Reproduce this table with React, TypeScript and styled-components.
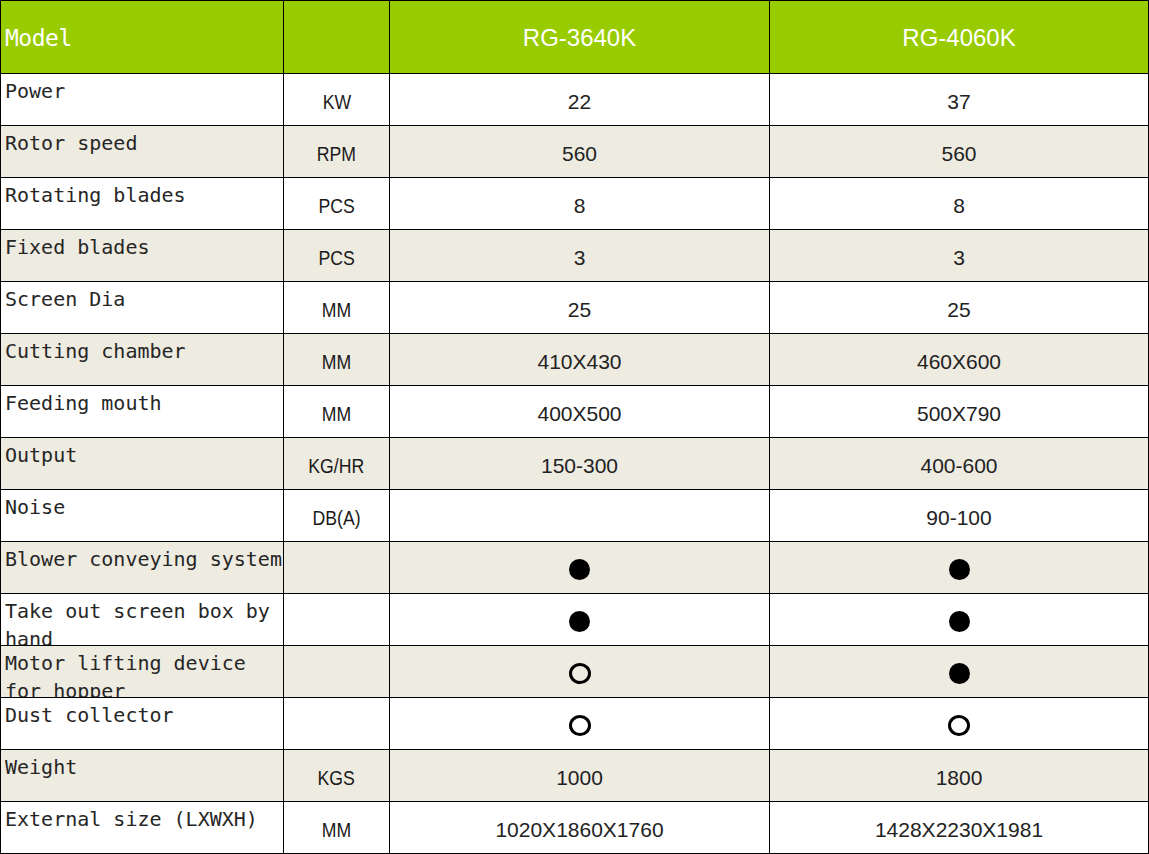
import React from "react";
import styled, { createGlobalStyle } from "styled-components";

const Global = createGlobalStyle`
  html, body { margin: 0; padding: 0; background: #ffffff; }
  body { font-family: "Liberation Sans", Arial, sans-serif; }
`;

const Table = styled.div`
  width: 1149px;
  border-top: 1px solid #000;
  border-left: 1px solid #000;
  box-sizing: border-box;
`;

const Row = styled.div<{ $head?: boolean; $alt?: boolean }>`
  display: grid;
  grid-template-columns: 283px 106px 380px 379px;
  height: ${(p) => (p.$head ? 73 : 52)}px;
  background: ${(p) => (p.$head ? "#99cc00" : p.$alt ? "#eeebe1" : "#ffffff")};
`;

const Cell = styled.div`
  box-sizing: border-box;
  border-right: 1px solid #000;
  border-bottom: 1px solid #000;
  overflow: hidden;
  display: flex;
  align-items: center;
  justify-content: center;
`;

const HeadLabel = styled(Cell)`
  justify-content: flex-start;
  padding: 2px 0 0 4px;
  color: #ffffff;
  font-family: "DejaVu Sans Mono", "Liberation Mono", monospace;
  font-size: 23px;
  letter-spacing: -0.5px;
`;

const HeadModel = styled(Cell)`
  color: #ffffff;
  font-family: "Liberation Sans", Arial, sans-serif;
  font-size: 24px;
  padding-top: 2px;
`;

const Label = styled(Cell)`
  display: block;
  padding: 3px 0 0 4px;
  color: #262626;
  font-family: "DejaVu Sans Mono", "Liberation Mono", monospace;
  font-size: 20px;
  line-height: 28px;
  white-space: normal;
`;

const Unit = styled(Cell)`
  color: #1a1a1a;
  font-family: "Liberation Sans", Arial, sans-serif;
  font-size: 21px;
  padding-top: 4px;
`;

const UnitText = styled.span`
  display: inline-block;
  transform: scaleX(0.84);
`;

const Value = styled(Cell)`
  color: #222222;
  font-family: "Liberation Sans", Arial, sans-serif;
  font-size: 21px;
  padding-top: 4px;
`;

const Dot = styled.span`
  display: block;
  width: 21px;
  height: 21px;
  border-radius: 50%;
  background: #000;
`;

const Ring = styled.span`
  display: block;
  box-sizing: border-box;
  width: 22px;
  height: 21px;
  border-radius: 50%;
  border: 3px solid #000;
`;

type V = string | "dot" | "ring";

const rows: { label: string; unit: string; a: V; b: V }[] = [
  { label: "Power", unit: "KW", a: "22", b: "37" },
  { label: "Rotor speed", unit: "RPM", a: "560", b: "560" },
  { label: "Rotating blades", unit: "PCS", a: "8", b: "8" },
  { label: "Fixed blades", unit: "PCS", a: "3", b: "3" },
  { label: "Screen Dia", unit: "MM", a: "25", b: "25" },
  { label: "Cutting chamber", unit: "MM", a: "410X430", b: "460X600" },
  { label: "Feeding mouth", unit: "MM", a: "400X500", b: "500X790" },
  { label: "Output", unit: "KG/HR", a: "150-300", b: "400-600" },
  { label: "Noise", unit: "DB(A)", a: "", b: "90-100" },
  { label: "Blower conveying system", unit: "", a: "dot", b: "dot" },
  { label: "Take out screen box by hand", unit: "", a: "dot", b: "dot" },
  { label: "Motor lifting device for hopper", unit: "", a: "ring", b: "dot" },
  { label: "Dust collector", unit: "", a: "ring", b: "ring" },
  { label: "Weight", unit: "KGS", a: "1000", b: "1800" },
  { label: "External size (LXWXH)", unit: "MM", a: "1020X1860X1760", b: "1428X2230X1981" },
];

const renderValue = (v: V) =>
  v === "dot" ? <Dot /> : v === "ring" ? <Ring /> : v;

export default function App() {
  return (
    <>
      <Global />
      <Table>
        <Row $head>
          <HeadLabel>Model</HeadLabel>
          <Cell />
          <HeadModel>RG-3640K</HeadModel>
          <HeadModel>RG-4060K</HeadModel>
        </Row>
        {rows.map((r, i) => (
          <Row key={r.label} $alt={i % 2 === 1}>
            <Label>{r.label}</Label>
            <Unit>{r.unit && <UnitText>{r.unit}</UnitText>}</Unit>
            <Value>{renderValue(r.a)}</Value>
            <Value>{renderValue(r.b)}</Value>
          </Row>
        ))}
      </Table>
    </>
  );
}
